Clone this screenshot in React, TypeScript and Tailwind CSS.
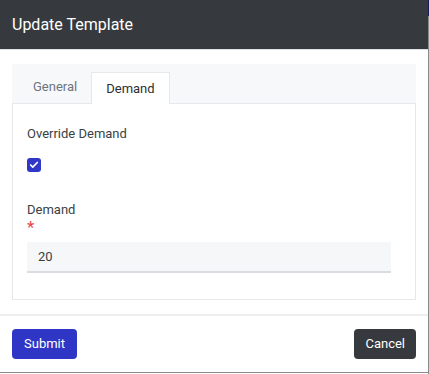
import { Check } from "lucide-react";

const font = { fontFamily: "Roboto, 'Noto Sans', sans-serif" };

export default function App() {
  return (
    <div style={font} className="flex w-[429px] h-[374px] bg-white">
      <div className="flex flex-col w-[428px] h-[373px] border-b border-[#8a8a8a]">
        {/* Header */}
        <div className="h-[49px] bg-[#363a3e] flex items-center px-3 border-b border-[#dee2e6] box-content">
          <h1 className="text-white text-[16px] leading-none">Update Template</h1>
        </div>

        {/* Body */}
        <div className="px-3 pt-[14px] pb-[14px] border-b-2 border-[#eceef0]">
          <div className="bg-[#f7f8fa] h-[39px] flex items-end pl-[7px]">
            <button className="h-[32px] px-[14px] text-[13px] text-[#6c757d]">General</button>
            <button className="h-[32px] px-[14px] text-[13px] text-[#2b2f33] bg-white border-x border-t border-[#e6e8eb] -mb-px">
              Demand
            </button>
          </div>
          <div className="border border-[#e6e8eb] h-[197px] px-[14px] pt-[20px]">
            <div className="text-[13px] leading-5 text-[#3a3f44]">Override Demand</div>
            <div className="mt-[14px] w-[14px] h-[14px] rounded-[3px] bg-[#3036c8] flex items-center justify-center">
              <Check className="w-[10px] h-[10px] text-white" strokeWidth={4} />
            </div>
            <div className="mt-[28px] text-[13px] leading-5 text-[#3a3f44]">Demand</div>
            <div className="text-[#f0424b] text-[17px] leading-[14px] h-[14px]">*</div>
            <div className="mt-[8px] w-[364px] h-[31px] bg-[#f6f7f9] border-b-2 border-[#d9dde2] flex items-center px-[11px] text-[13px] text-[#3a3f44]">
              20
            </div>
          </div>
        </div>

        {/* Footer */}
        <div className="flex-1 flex items-center justify-between px-3">
          <button className="h-[30px] px-3 rounded bg-[#2f36c6] text-white text-[13px]">Submit</button>
          <button className="h-[30px] px-[11px] rounded bg-[#363a3e] text-white text-[13px]">Cancel</button>
        </div>
      </div>
      <div className="w-px h-[374px] flex flex-col">
        <div className="h-[16px] bg-[#1c1d55]" />
        <div className="flex-1 bg-[#8a8a8a]" />
      </div>
    </div>
  );
}
